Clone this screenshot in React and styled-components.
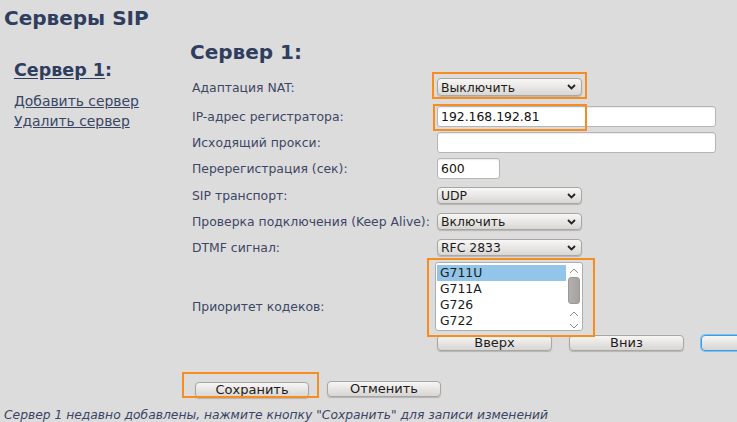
import React from 'react';
import styled, { createGlobalStyle } from 'styled-components';

const Global = createGlobalStyle`
  html, body { margin: 0; padding: 0; background: #dcdcdc; overflow: hidden; }
  body { font-family: "DejaVu Sans", Verdana, sans-serif; }
`;

const Page = styled.div`
  width: 737px;
  height: 422px;
  overflow: hidden;
  background: #dcdcdc;
  color: #3a4565;
`;

const Title = styled.h1`
  margin: 0;
  padding: 6px 0 0 4px;
  font-size: 20px;
  line-height: 24px;
  font-weight: bold;
  color: #2f3d5e;
`;

const Content = styled.div`
  display: flex;
`;

const Sidebar = styled.div`
  flex: none;
  width: 176px;
  padding: 29px 0 0 14px;
`;

const SideHeading = styled.div`
  font-size: 17.5px;
  line-height: 22px;
  font-weight: bold;
  color: #2f3d5e;
  margin-bottom: 10px;
  span { text-decoration: underline; text-underline-offset: 2px; }
`;

const SideLink = styled.a`
  display: block;
  width: max-content;
  font-size: 13.9px;
  line-height: 20px;
  color: #3a4565;
  text-decoration: underline;
  text-underline-offset: 1px;
  cursor: pointer;
`;

const Main = styled.div`
  flex: 1;
  padding-top: 10px;
`;

const MainHeading = styled.h2`
  margin: 0;
  font-size: 20px;
  line-height: 24px;
  font-weight: bold;
  color: #2f3d5e;
`;

const Row = styled.div`
  display: grid;
  grid-template-columns: 244px auto;
  align-items: center;
  padding-left: 2px;
  margin-top: ${p => p.$mt}px;
`;

const Label = styled.div`
  font-size: 12.4px;
  color: #3c4766;
  white-space: nowrap;
`;

const Marked = styled.div`
  position: relative;
  width: max-content;
`;

const Ring = styled.div`
  position: absolute;
  left: ${p => p.$l}px;
  top: ${p => p.$t}px;
  width: ${p => p.$w}px;
  height: ${p => p.$h}px;
  box-sizing: border-box;
  border: 2px solid #f78d1e;
  pointer-events: none;
`;

const SelectBox = styled.div`
  box-sizing: border-box;
  width: 145px;
  height: ${p => p.$h || 17}px;
  margin-left: 1px;
  display: flex;
  align-items: center;
  justify-content: space-between;
  padding: 0 5px 0 3px;
  border: 1px solid #a9a7a4;
  border-radius: 4px;
  background: linear-gradient(#f8f7f6, #e6e4e2 60%, #d9d7d4);
  box-shadow: 0 1px 1px rgba(0, 0, 0, 0.18);
  font-size: 12.4px;
  color: #1c1c1c;
`;

const TextInput = styled.input`
  box-sizing: border-box;
  width: ${p => p.$w}px;
  height: 21px;
  margin: 0 0 0 1px;
  padding: 0 3px;
  border: 1px solid #b5b5b5;
  border-radius: 3px;
  background: #fff;
  box-shadow: inset 0 1px 1px rgba(0, 0, 0, 0.08);
  font-family: "DejaVu Sans", Verdana, sans-serif;
  font-size: 12.4px;
  color: #111;
  outline: none;
`;

const CodecCol = styled.div`
  display: flex;
  flex-direction: column;
  gap: 4px;
`;

const ListBox = styled.div`
  box-sizing: border-box;
  width: 148px;
  height: 69px;
  margin-left: -1px;
  display: flex;
  padding: 2px 1px 1px 1px;
  border: 1px solid #aeaeae;
  border-radius: 3px;
  background: #fff;
`;

const Options = styled.div`
  flex: 1;
`;

const Option = styled.div`
  height: 16px;
  line-height: 16px;
  padding-left: 3px;
  font-size: 12.4px;
  color: #1c1c1c;
  background: ${p => (p.$sel ? '#93c5ea' : 'transparent')};
`;

const ScrollBar = styled.div`
  width: 14px;
  margin-left: 1px;
  display: flex;
  flex-direction: column;
  align-items: center;
`;

const Arrow = styled.svg`
  display: block;
  flex: none;
  margin-top: ${p => p.$mt || 0}px;
`;

const Thumb = styled.div`
  width: 12px;
  height: 28px;
  margin-top: 3px;
  border-radius: 3px;
  border: 1px solid #9b9794;
  box-sizing: border-box;
  background: linear-gradient(90deg, #b3afac, #a6a29f);
`;

const ButtonRow = styled.div`
  display: flex;
  gap: 17px;
  margin-left: 1px;
`;

const Button = styled.button`
  flex: none;
  box-sizing: border-box;
  width: ${p => p.$w || 115}px;
  height: 16px;
  padding: 0;
  border: 1px solid ${p => (p.$focus ? '#3c9ce6' : '#a8a6a3')};
  box-shadow: ${p => (p.$focus ? '0 0 0 1px #7cc0f0' : '0 1px 1px rgba(0,0,0,0.18)')};
  border-radius: 4px;
  background: linear-gradient(#f7f6f5, #e4e2e0 60%, #d8d6d3);
  font-family: "DejaVu Sans", Verdana, sans-serif;
  font-size: 13px;
  line-height: 14px;
  color: #1c1c1c;
`;

const SaveRow = styled.div`
  display: flex;
  align-items: center;
  gap: 18px;
  margin: 28px 0 0 5px;
`;

const Status = styled.div`
  margin: 9px 0 0 4px;
  font-size: 12.3px;
  line-height: 16px;
  font-style: italic;
  color: #3a4565;
  white-space: nowrap;
`;

const Chevron = () => (
  <svg width="9" height="6" viewBox="0 0 9 6">
    <path d="M1 1 L4.5 4.5 L8 1" fill="none" stroke="#222" strokeWidth="1.8" />
  </svg>
);

const Select = ({ value, h }) => (
  <SelectBox $h={h}>
    <span>{value}</span>
    <Chevron />
  </SelectBox>
);

const UpArrow = ({ mt }) => (
  <Arrow $mt={mt} width="10" height="6" viewBox="0 0 10 6">
    <path d="M1 5 L5 1 L9 5" fill="none" stroke="#8a8a8a" strokeWidth="1" />
  </Arrow>
);

const DownArrow = ({ mt }) => (
  <Arrow $mt={mt} width="10" height="6" viewBox="0 0 10 6">
    <path d="M1 1 L5 5 L9 1" fill="none" stroke="#8a8a8a" strokeWidth="1" />
  </Arrow>
);

const codecs = ['G711U', 'G711A', 'G726', 'G722'];

export default function App() {
  return (
    <Page>
      <Global />
      <Title>Серверы SIP</Title>
      <Content>
        <Sidebar>
          <SideHeading><span>Сервер 1</span>:</SideHeading>
          <SideLink>Добавить сервер</SideLink>
          <SideLink>Удалить сервер</SideLink>
        </Sidebar>
        <Main>
          <MainHeading>Сервер 1:</MainHeading>

          <Row $mt={14}>
            <Label>Адаптация NAT:</Label>
            <Marked>
              <Select value="Выключить" h={18} />
              <Ring $l={-4} $t={-6} $w={155} $h={27} />
            </Marked>
          </Row>

          <Row $mt={10}>
            <Label>IP-адрес регистратора:</Label>
            <Marked>
              <TextInput $w={279} defaultValue="192.168.192.81" />
              <Ring $l={-3} $t={-2} $w={154} $h={27} />
            </Marked>
          </Row>

          <Row $mt={5}>
            <Label>Исходящий прокси:</Label>
            <TextInput $w={279} defaultValue="" />
          </Row>

          <Row $mt={5}>
            <Label>Перерегистрация (сек):</Label>
            <TextInput $w={63} defaultValue="600" />
          </Row>

          <Row $mt={8}>
            <Label>SIP транспорт:</Label>
            <Select value="UDP" />
          </Row>

          <Row $mt={9}>
            <Label>Проверка подключения (Keep Alive):</Label>
            <Select value="Включить" />
          </Row>

          <Row $mt={9}>
            <Label>DTMF сигнал:</Label>
            <Select value="RFC 2833" />
          </Row>

          <Row $mt={6}>
            <Label>Приоритет кодеков:</Label>
            <CodecCol>
              <Marked>
                <ListBox>
                  <Options>
                    {codecs.map((c, i) => (
                      <Option key={c} $sel={i === 0}>{c}</Option>
                    ))}
                  </Options>
                  <ScrollBar>
                    <UpArrow mt={3} />
                    <Thumb />
                    <UpArrow mt={7} />
                    <DownArrow mt={6} />
                  </ScrollBar>
                </ListBox>
                <Ring $l={-9} $t={-4} $w={168} $h={79} />
              </Marked>
              <ButtonRow>
                <Button>Вверх</Button>
                <Button>Вниз</Button>
                <Button $focus> </Button>
              </ButtonRow>
            </CodecCol>
          </Row>

          <SaveRow>
            <Marked>
              <Button $w={114}>Сохранить</Button>
              <Ring $l={-13} $t={-7} $w={137} $h={26} />
            </Marked>
            <Button $w={114}>Отменить</Button>
          </SaveRow>
        </Main>
      </Content>
      <Status>Сервер 1 недавно добавлены, нажмите кнопку "Сохранить" для записи изменений</Status>
    </Page>
  );
}
